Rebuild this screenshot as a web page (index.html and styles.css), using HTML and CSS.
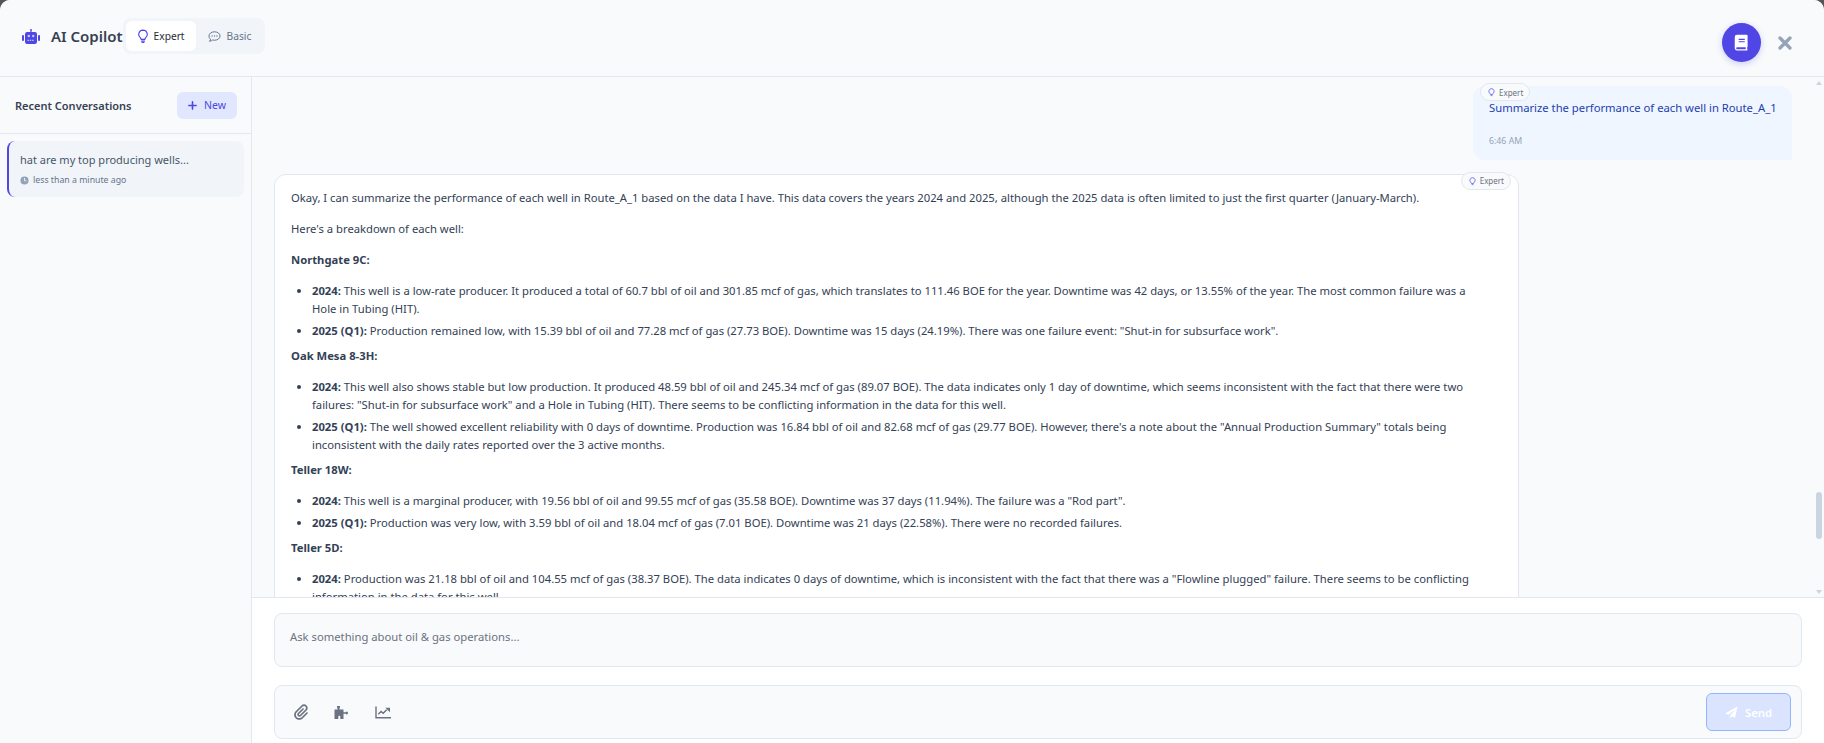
FILE: index.html
```html
<!DOCTYPE html>
<html lang="en">
<head>
<meta charset="utf-8">
<title>AI Copilot</title>
<link rel="stylesheet" href="styles.css">
</head>
<body>
<div class="app">
  <header class="topbar">
    <div class="brand">
      <svg class="robot" viewBox="0 0 18 15" width="18" height="15"><path fill="#4f46e5" d="M9 0a1 1 0 0 1 .6 1.800V3h3.200A2.200 2.200 0 0 1 15 5.200v7.600a2.200 2.200 0 0 1-2.200 2.200H5.200A2.200 2.200 0 0 1 3 12.800V5.200A2.200 2.200 0 0 1 5.200 3h3.200V1.800A1 1 0 0 1 9 0z"/><rect x="0" y="6" width="2" height="6" rx="1" fill="#4f46e5"/><rect x="16" y="6" width="2" height="6" rx="1" fill="#4f46e5"/><circle cx="6.800" cy="7" r="1.200" fill="#c7c8f5"/><circle cx="11.200" cy="7" r="1.200" fill="#c7c8f5"/><path stroke="#c7c8f5" stroke-width="1.300" stroke-dasharray="1.400 .9" d="M5.500 11.300h7"/></svg>
      <span class="brand-name">AI Copilot</span>
    </div>
    <div class="mode-switch">
      <div class="mode mode-on">
        <svg class="ico-bulb" viewBox="2.500 0 11 16"><path fill="none" stroke="#4f46e5" stroke-width="1.300" d="M8 1.200a4.700 4.700 0 0 0-3 8.300c.6.600.9 1.100 1 2h4c.1-.9.400-1.400 1-2a4.700 4.700 0 0 0-3-8.300z"/><path fill="none" stroke="#4f46e5" stroke-width="1.300" stroke-linecap="round" d="M6.400 13.300h3.200M7 15h2"/></svg>
        <span>Expert</span>
      </div>
      <div class="mode">
        <svg class="ico-chat" viewBox="0 0 16 16"><path fill="none" stroke="#64748b" stroke-width="1.200" d="M8 2.200c3.800 0 6.800 2.300 6.800 5.200S11.800 12.600 8 12.600c-.8 0-1.600-.1-2.300-.3-.9.800-2.300 1.500-4 1.500.8-.8 1.300-1.700 1.400-2.500C2 10.400 1.200 9 1.200 7.400 1.200 4.500 4.200 2.200 8 2.200z"/><circle cx="5" cy="7.400" r=".8" fill="#64748b"/><circle cx="8" cy="7.400" r=".8" fill="#64748b"/><circle cx="11" cy="7.400" r=".8" fill="#64748b"/></svg>
        <span>Basic</span>
      </div>
    </div>
    <div class="top-actions">
      <button class="book-btn" aria-label="Documentation">
        <svg viewBox="0 0 16 18" width="15" height="17"><path fill="#fff" fill-rule="evenodd" d="M3.200.8h10.300c.6 0 1 .4 1 1v11.500c0 .4-.2.700-.5.900v1.800c.4.100.5.400.5.700 0 .5-.4.700-.8.700H3.200A2.500 2.500 0 0 1 .8 15.300V3.200A2.400 2.400 0 0 1 3.200.8zM3.300 14.100a1 1 0 0 0 0 2h9.200v-2zM5 5v1.200h6.500V5zm0 2.600v1.200h6.500V7.600z"/></svg>
      </button>
      <svg class="close" viewBox="0 0 14 14" width="14" height="14"><path stroke="#94a3b8" stroke-width="3.200" stroke-linecap="round" d="M2 2l10 10M12 2L2 12"/></svg>
    </div>
  </header>
  <div class="body">
    <aside class="sidebar">
      <div class="side-head">
        <h2>Recent Conversations</h2>
        <button class="new-btn"><svg viewBox="0 0 10 10" width="9" height="9"><path stroke="#4f46e5" stroke-width="1.800" stroke-linecap="round" d="M5 1v8M1 5h8"/></svg><span>New</span></button>
      </div>
      <div class="side-list">
        <div class="conv">
          <div class="conv-title">hat are my top producing wells...</div>
          <div class="conv-time">
            <svg viewBox="0 0 10 10" width="9" height="9"><circle cx="5" cy="5" r="4.500" fill="#94a3b8"/><path stroke="#f1f5f9" stroke-width="1" fill="none" d="M5 2.200V5.300h2"/></svg>
            <span>less than a minute ago</span>
          </div>
        </div>
      </div>
    </aside>
    <main class="main">
      <div class="messages">
        <div class="msg-user">
          <div class="chip chip-user"><svg viewBox="0 0 16 16" width="9" height="9"><path fill="none" stroke="#6366f1" stroke-width="1.500" d="M8 1.200a4.700 4.700 0 0 0-3 8.300c.6.600.9 1.100 1 2h4c.1-.9.400-1.400 1-2a4.700 4.700 0 0 0-3-8.300zM6.400 13.500h3.200"/></svg><span>Expert</span></div>
          <p class="user-text">Summarize the performance of each well in Route_A_1</p>
          <div class="user-time">6:46 AM</div>
        </div>
        <div class="msg-ai">
          <div class="chip chip-ai"><svg viewBox="0 0 16 16" width="9" height="9"><path fill="none" stroke="#6366f1" stroke-width="1.500" d="M8 1.200a4.700 4.700 0 0 0-3 8.300c.6.600.9 1.100 1 2h4c.1-.9.400-1.400 1-2a4.700 4.700 0 0 0-3-8.300zM6.400 13.500h3.200"/></svg><span>Expert</span></div>
          <p>Okay, I can summarize the performance of each well in Route_A_1 based on the data I have. This data covers the years 2024 and 2025, although the 2025 data is often limited to just the first quarter (January-March).</p>
          <p>Here's a breakdown of each well:</p>
          <p><strong>Northgate 9C:</strong></p>
          <ul>
            <li><strong>2024:</strong> This well is a low-rate producer. It produced a total of 60.7 bbl of oil and 301.85 mcf of gas, which translates to 111.46 BOE for the year. Downtime was 42 days, or 13.55% of the year. The most common failure was a Hole in Tubing (HIT).</li>
            <li><strong>2025 (Q1):</strong> Production remained low, with 15.39 bbl of oil and 77.28 mcf of gas (27.73 BOE). Downtime was 15 days (24.19%). There was one failure event: "Shut-in for subsurface work".</li>
          </ul>
          <p><strong>Oak Mesa 8-3H:</strong></p>
          <ul>
            <li><strong>2024:</strong> This well also shows stable but low production. It produced 48.59 bbl of oil and 245.34 mcf of gas (89.07 BOE). The data indicates only 1 day of downtime, which seems inconsistent with the fact that there were two failures: "Shut-in for subsurface work" and a Hole in Tubing (HIT). There seems to be conflicting information in the data for this well.</li>
            <li><strong>2025 (Q1):</strong> The well showed excellent reliability with 0 days of downtime. Production was 16.84 bbl of oil and 82.68 mcf of gas (29.77 BOE). However, there's a note about the "Annual Production Summary" totals being inconsistent with the daily rates reported over the 3 active months.</li>
          </ul>
          <p><strong>Teller 18W:</strong></p>
          <ul>
            <li><strong>2024:</strong> This well is a marginal producer, with 19.56 bbl of oil and 99.55 mcf of gas (35.58 BOE). Downtime was 37 days (11.94%). The failure was a "Rod part".</li>
            <li><strong>2025 (Q1):</strong> Production was very low, with 3.59 bbl of oil and 18.04 mcf of gas (7.01 BOE). Downtime was 21 days (22.58%). There were no recorded failures.</li>
          </ul>
          <p><strong>Teller 5D:</strong></p>
          <ul>
            <li><strong>2024:</strong> Production was 21.18 bbl of oil and 104.55 mcf of gas (38.37 BOE). The data indicates 0 days of downtime, which is inconsistent with the fact that there was a "Flowline plugged" failure. There seems to be conflicting information in the data for this well.</li>
          </ul>
        </div>
        <div class="scroll-up"></div>
        <div class="scroll-thumb"></div>
        <div class="scroll-down"></div>
      </div>
      <div class="composer">
        <div class="input-box">Ask something about oil &amp; gas operations...</div>
        <div class="tool-box">
          <svg class="tool" viewBox="0 0 448 512" width="14" height="16"><path fill="#6b7280" d="M364.200 83.800c-24.400-24.400-64-24.400-88.400 0l-184 184c-42.100 42.100-42.100 110.300 0 152.400s110.300 42.100 152.400 0l152-152c10.900-10.900 28.700-10.900 39.600 0s10.900 28.700 0 39.600l-152 152c-64 64-167.600 64-231.600 0s-64-167.600 0-231.600l184-184c46.300-46.300 121.300-46.300 167.600 0s46.300 121.300 0 167.600l-176 176c-28.600 28.600-75 28.600-103.600 0s-28.600-75 0-103.600l144-144c10.900-10.900 28.700-10.900 39.600 0s10.900 28.700 0 39.600l-144 144c-6.700 6.700-6.700 17.700 0 24.400s17.700 6.700 24.400 0l176-176c24.400-24.400 24.400-64 0-88.400z"/></svg>
          <svg class="tool" viewBox="0 0 15 13" width="15" height="13"><path fill="#6b7280" d="M3.300 1.700a1.500 1.500 0 1 1 2.400 0L5.400 3.400H9.500V6.300h2.300a1 1 0 0 1 2 .9 1 1 0 0 1-2 .5H9.500V13H6.300v-2.300a1 1 0 0 0-2 0V13H.5V3.400h3.100z"/></svg>
          <svg class="tool" viewBox="0 0 16 13" width="16" height="13"><path fill="none" stroke="#6b7280" stroke-width="1.400" d="M1 .5v11.300h15"/><path fill="none" stroke="#6b7280" stroke-width="1.400" d="M3.300 8.300l2.800-2.800 2.100 1.800 3.500-3.600"/><path fill="#6b7280" d="M10.300 1.700h4.700v4.500z"/></svg>
          <button class="send"><svg viewBox="0 0 14 14" width="13" height="13"><path fill="#fff" d="M13.500.5 10.800 13 7.300 11l-2 2.500V10.800L11 3.500 3.700 9.500.5 7.800z"/></svg><span>Send</span></button>
        </div>
      </div>
    </main>
  </div>
</div>
</body>
</html>
```
FILE: styles.css
```css
* { box-sizing: border-box; }
html, body { margin: 0; height: 100%; background: #555; }
body { font-family: "Noto Sans", sans-serif; color: #334155; overflow: hidden; }
p, ul, h2 { margin: 0; padding: 0; }
button { font-family: inherit; border: none; padding: 0; }

.app { height: 743px; display: flex; flex-direction: column; background: #fff; border-radius: 10px 10px 0 0; overflow: hidden; }

.topbar { height: 77px; flex: none; display: flex; align-items: center; padding: 0 32px 4px 22px; background: #f8fafc; border-bottom: 1px solid #e2e8f0; }
.brand { display: flex; align-items: center; gap: 11px; }
.robot { display: block; }
.brand-name { font-size: 15px; font-weight: 600; color: #374151; }
.mode-switch { display: flex; align-items: center; padding: 3px; background: #f1f5f9; border-radius: 8px; height: 36px; }
.mode { display: flex; align-items: center; gap: 6px; height: 30px; padding: 0 11px 0 12px; font-size: 10.200px; color: #64748b; border-radius: 6px; }
.mode-on { background: #fff; color: #1f2937; }
.ico-bulb { width: 10px; height: 14.500px; display: block; }
.ico-chat { width: 13px; height: 13px; display: block; }
.top-actions { margin-left: auto; display: flex; align-items: center; gap: 17px; padding-top: 13px; }
.book-btn { width: 39px; height: 39px; border-radius: 50%; background: #4f46e5; display: flex; align-items: center; justify-content: center; box-shadow: 0 2px 6px rgba(79,70,229,.25); }
.book-btn svg { display: block; }
.close { display: block; }

.body { flex: 1; min-height: 0; display: flex; }

.sidebar { width: 252px; flex: none; background: #f8fafc; border-right: 1px solid #e2e8f0; }
.side-head { height: 57px; display: flex; align-items: center; justify-content: space-between; padding: 0 14px 0 15px; border-bottom: 1px solid #e2e8f0; }
.side-head h2 { font-size: 11px; font-weight: 600; color: #374151; }
.new-btn { width: 60px; height: 27px; display: flex; align-items: center; justify-content: center; gap: 7px; background: #e0e7ff; color: #4f46e5; font-size: 10.500px; border-radius: 6px; }
.side-list { padding: 7px; }
.conv { height: 56px; padding: 11px 11px; background: #f1f5f9; border-left: 2px solid #4f46e5; border-radius: 8px; }
.conv-title { font-size: 11px; line-height: 16px; color: #475569; }
.conv-time { display: flex; align-items: center; gap: 4px; margin-top: 6px; font-size: 8.750px; line-height: 12px; color: #64748b; }

.main { flex: 1; min-width: 0; display: flex; flex-direction: column; }
.messages { height: 521px; flex: none; position: relative; overflow: hidden; background: #f9fafb; border-bottom: 1px solid #e2e8f0; padding: 9px 32px 0 22px; }

.msg-user { position: relative; width: 319px; height: 74px; margin-left: auto; padding: 13px 16px 0; background: #eff6ff; border-radius: 12px 12px 0 12px; color: #1e40af; }
.user-text { font-size: 11.250px; line-height: 18px; white-space: nowrap; }
.user-time { margin-top: 18px; font-size: 8.750px; line-height: 12px; color: #94a3b8; }

.chip { position: absolute; display: flex; align-items: center; gap: 3px; height: 18px; padding: 0 6px; font-size: 8px; color: #6b7280; background: #f8fafc; border: 1px solid #e2e8f0; border-radius: 9px; }
.chip-user { top: -3px; left: 7px; }
.chip-ai { top: -3px; right: 7px; }

.msg-ai { position: relative; width: 1245px; margin-top: 14px; padding: 14px 16px 16px; background: #fff; border: 1px solid #e2e8f0; border-radius: 12px 12px 12px 0; font-size: 11.250px; line-height: 18px; color: #334155; }
.msg-ai p { margin-bottom: 13px; }
.msg-ai strong { font-weight: 700; }
.msg-ai ul { padding: 0 22px 0 21px; margin-bottom: 7px; }
.msg-ai li { margin-bottom: 4px; }

.scroll-up, .scroll-down { position: absolute; right: 2px; width: 0; height: 0; border-left: 3px solid transparent; border-right: 3px solid transparent; }
.scroll-up { top: 4px; border-bottom: 4px solid #cbd5e1; }
.scroll-down { bottom: 3px; border-top: 4px solid #cbd5e1; }
.scroll-thumb { position: absolute; right: 2px; top: 415px; width: 6px; height: 47px; background: #cbd5e1; border-radius: 3px; }

.composer { flex: 1; background: #fff; padding: 15px 22px 0; }
.input-box { height: 54px; padding: 14px 15px; background: #f8fafc; border: 1px solid #e2e8f0; border-radius: 8px; font-size: 11.250px; line-height: 18px; color: #6b7280; }
.tool-box { height: 54px; margin-top: 18px; display: flex; align-items: center; gap: 26px; padding: 0 10px 0 19px; background: #f8fafc; border: 1px solid #e2e8f0; border-radius: 8px; }
.tool { display: block; }
.send { margin-left: auto; width: 85px; height: 38px; display: flex; align-items: center; justify-content: center; gap: 7px; color: #fff; font-size: 11.250px; font-weight: 600; background: #dbe4fe; border: 1px solid #93b5fd; border-radius: 6px; }
```
